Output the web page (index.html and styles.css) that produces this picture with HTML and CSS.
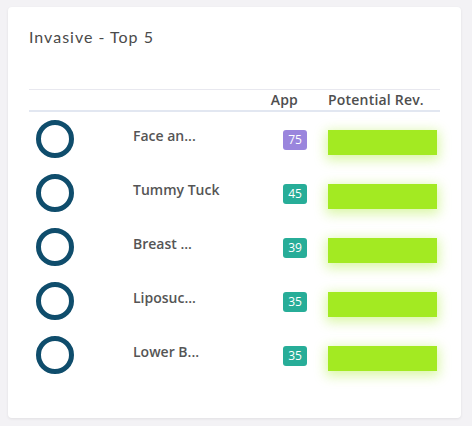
FILE: index.html
```html
<!DOCTYPE html>
<html>
<head>
<meta charset="utf-8">
<link rel="stylesheet" href="styles.css">
</head>
<body>
<div class="card">
  <h2 class="title">Invasive - Top 5</h2>
  <div class="table">
    <div class="head">
      <div></div>
      <div></div>
      <div class="h-app">App</div>
      <div class="h-rev">Potential Rev.</div>
    </div>
    <div class="row">
      <div class="ic"><svg width="38" height="38" viewBox="0 0 38 38"><circle cx="19" cy="19" r="16.5" fill="none" stroke="#0f4d6c" stroke-width="5"/></svg></div>
      <div class="name">Face an...</div>
      <div class="app"><span class="badge purple">75</span></div>
      <div class="rev"><div class="bar"></div></div>
    </div>
    <div class="row">
      <div class="ic"><svg width="38" height="38" viewBox="0 0 38 38"><circle cx="19" cy="19" r="16.5" fill="none" stroke="#0f4d6c" stroke-width="5"/></svg></div>
      <div class="name">Tummy Tuck</div>
      <div class="app"><span class="badge">45</span></div>
      <div class="rev"><div class="bar"></div></div>
    </div>
    <div class="row">
      <div class="ic"><svg width="38" height="38" viewBox="0 0 38 38"><circle cx="19" cy="19" r="16.5" fill="none" stroke="#0f4d6c" stroke-width="5"/></svg></div>
      <div class="name">Breast ...</div>
      <div class="app"><span class="badge">39</span></div>
      <div class="rev"><div class="bar"></div></div>
    </div>
    <div class="row">
      <div class="ic"><svg width="38" height="38" viewBox="0 0 38 38"><circle cx="19" cy="19" r="16.5" fill="none" stroke="#0f4d6c" stroke-width="5"/></svg></div>
      <div class="name">Liposuc...</div>
      <div class="app"><span class="badge">35</span></div>
      <div class="rev"><div class="bar"></div></div>
    </div>
    <div class="row">
      <div class="ic"><svg width="38" height="38" viewBox="0 0 38 38"><circle cx="19" cy="19" r="16.5" fill="none" stroke="#0f4d6c" stroke-width="5"/></svg></div>
      <div class="name">Lower B...</div>
      <div class="app"><span class="badge">35</span></div>
      <div class="rev"><div class="bar"></div></div>
    </div>
  </div>
</div>
</body>
</html>
```

FILE: styles.css
```css
html, body {
  margin: 0;
  padding: 0;
  background: #f3f2f5;
}
body {
  padding: 7px 11px 8px 8px;
  font-family: "Open Sans", sans-serif;
}
.card {
  background: #ffffff;
  border-radius: 4px;
  box-shadow: 0 1px 3px rgba(0, 0, 0, 0.08);
  height: 411px;
  box-sizing: border-box;
  padding: 20px 21px 0 21px;
}
.title {
  margin: 0;
  font-family: "Lato", sans-serif;
  font-weight: 400;
  font-size: 16px;
  line-height: 20px;
  letter-spacing: 1px;
  color: #4a4a4a;
  height: 62px;
}
.table {
  width: 411px;
}
.head, .row {
  display: grid;
  grid-template-columns: 104px 125px 70px 112px;
}
.head {
  border-top: 1px solid #e8e8ef;
  border-bottom: 2px solid #e2e7f1;
  height: 20px;
  font-weight: 600;
  font-size: 14px;
  line-height: 20px;
  letter-spacing: 0.2px;
  color: #4e4e4e;
}
.h-app {
  text-align: right;
  padding-right: 30px;
}
.row {
  height: 54px;
  align-items: start;
}
.ic {
  padding-left: 7px;
  padding-top: 8px;
  line-height: 0;
}
.name {
  padding-top: 14px;
  font-weight: 600;
  font-size: 14px;
  line-height: 20px;
  color: #555555;
  white-space: nowrap;
}
.app {
  padding-top: 18px;
  text-align: right;
  padding-right: 21px;
  line-height: 0;
}
.badge {
  display: inline-block;
  width: 24px;
  height: 20px;
  border-radius: 3px;
  background: #27ad98;
  color: #ffffff;
  font-size: 12px;
  line-height: 20px;
  text-align: center;
}
.badge.purple {
  background: #9a85dd;
}
.rev {
  padding-top: 18px;
}
.bar {
  width: 109px;
  height: 25px;
  background: #a3ea22;
  box-shadow: 0 3px 12px 2px rgba(163, 234, 34, 0.4);
}
```
